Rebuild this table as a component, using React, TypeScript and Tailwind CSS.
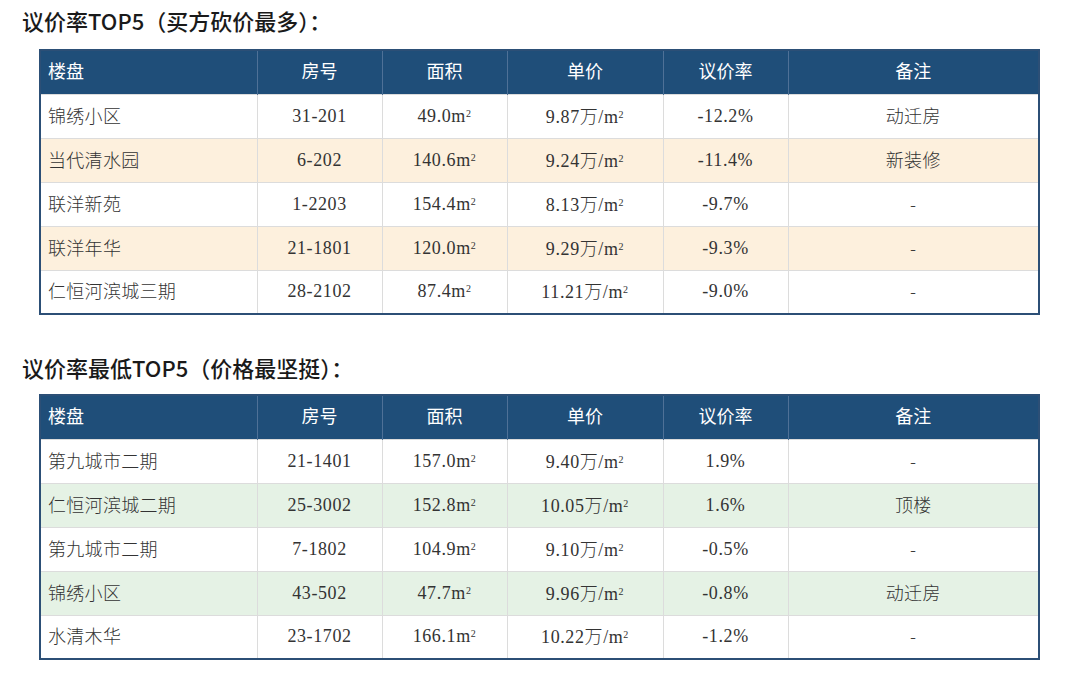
import React from "react";

type Row = {
  name: string;
  room: string;
  area: string;
  price: string;
  rate: string;
  note: string;
};

const topRows: Row[] = [
  { name: "锦绣小区", room: "31-201", area: "49.0", price: "9.87", rate: "-12.2%", note: "动迁房" },
  { name: "当代清水园", room: "6-202", area: "140.6", price: "9.24", rate: "-11.4%", note: "新装修" },
  { name: "联洋新苑", room: "1-2203", area: "154.4", price: "8.13", rate: "-9.7%", note: "-" },
  { name: "联洋年华", room: "21-1801", area: "120.0", price: "9.29", rate: "-9.3%", note: "-" },
  { name: "仁恒河滨城三期", room: "28-2102", area: "87.4", price: "11.21", rate: "-9.0%", note: "-" },
];

const lowRows: Row[] = [
  { name: "第九城市二期", room: "21-1401", area: "157.0", price: "9.40", rate: "1.9%", note: "-" },
  { name: "仁恒河滨城二期", room: "25-3002", area: "152.8", price: "10.05", rate: "1.6%", note: "顶楼" },
  { name: "第九城市二期", room: "7-1802", area: "104.9", price: "9.10", rate: "-0.5%", note: "-" },
  { name: "锦绣小区", room: "43-502", area: "47.7", price: "9.96", rate: "-0.8%", note: "动迁房" },
  { name: "水清木华", room: "23-1702", area: "166.1", price: "10.22", rate: "-1.2%", note: "-" },
];

const headers = ["楼盘", "房号", "面积", "单价", "议价率", "备注"];
const widths = ["w-[217px]", "w-[125px]", "w-[125px]", "w-[156px]", "w-[125px]", "w-[251px]"];

const cjk = "font-['Noto_Sans_CJK_SC',sans-serif] font-light text-[18px]";

function PriceTable({ rows, stripe }: { rows: Row[]; stripe: string }) {
  return (
    <table className="ml-[39px] w-[1001px] table-fixed border-collapse border-2 border-[#2c4f76]">
      <thead>
        <tr className="h-[44px] bg-[#1f4e79] text-white text-[18px] font-['Noto_Sans_CJK_SC',sans-serif]">
          {headers.map((h, i) => (
            <th
              key={h}
              className={`${widths[i]} pb-[3px] border-r border-[#4f7197] last:border-r-0 font-normal ${
                i === 0 ? "text-left pl-[7px]" : "text-center"
              }`}
            >
              {h}
            </th>
          ))}
        </tr>
      </thead>
      <tbody className="text-[18px] text-[#333] tracking-[0.6px] font-['Liberation_Serif','Noto_Sans_CJK_SC',serif]">
        {rows.map((r, idx) => (
          <tr key={idx} className={`h-[44px] border-t border-[#dcdcdc] ${idx % 2 === 1 ? stripe : "bg-white"}`}>
            <td className={`pl-[7px] pb-[2px] text-left border-r border-[#dcdcdc] tracking-[0.3px] ${cjk}`}>
              {r.name}
            </td>
            <td className="text-center border-r border-[#dcdcdc]">{r.room}</td>
            <td className="text-center border-r border-[#dcdcdc]">
              {r.area}m<sup className="text-[10px]">2</sup>
            </td>
            <td className="text-center border-r border-[#dcdcdc]">
              {r.price}
              <span className={cjk}>万</span>/m<sup className="text-[10px]">2</sup>
            </td>
            <td className="text-center border-r border-[#dcdcdc]">{r.rate}</td>
            <td className={`text-center pb-[2px] tracking-[0.3px] ${cjk}`}>{r.note}</td>
          </tr>
        ))}
      </tbody>
    </table>
  );
}

export default function App() {
  return (
    <div className="w-[1080px] h-[681px] bg-white overflow-hidden">
      <h2 className="h-[40px] flex items-center pl-[22px] text-[22px] font-medium text-[#1a1a1a] font-['Noto_Sans_CJK_SC',sans-serif]">
        议价率TOP5（买方砍价最多）：
      </h2>
      <div className="mt-[9px]">
        <PriceTable rows={topRows} stripe="bg-[#fdf0dd]" />
      </div>
      <h2 className="mt-[32px] h-[40px] flex items-center pl-[22px] text-[22px] font-medium text-[#1a1a1a] font-['Noto_Sans_CJK_SC',sans-serif]">
        议价率最低TOP5（价格最坚挺）：
      </h2>
      <div className="mt-[7px]">
        <PriceTable rows={lowRows} stripe="bg-[#e5f2e5]" />
      </div>
    </div>
  );
}
